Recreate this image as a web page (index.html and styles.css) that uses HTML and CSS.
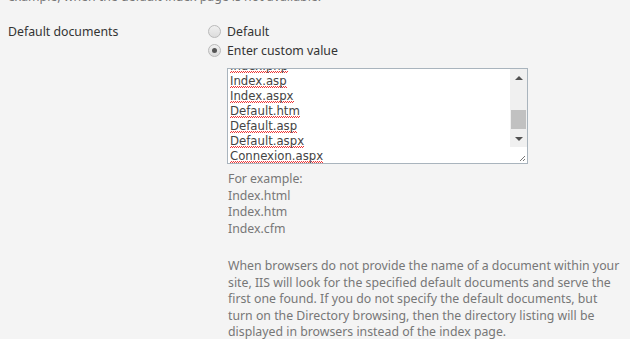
FILE: index.html
```html
<!DOCTYPE html>
<html lang="en">
<head>
  <meta charset="UTF-8">
  <title>Default documents</title>
  <link rel="stylesheet" href="styles.css">
</head>
<body>

  <p class="prev-hint">example, when the default index page is not available.</p>

  <div class="form-row">
    <div class="field-name">Default documents</div>
    <div class="field-value">
      <label class="radio"><span class="radio-dot"></span>Default</label>
      <label class="radio"><span class="radio-dot checked"></span>Enter custom value</label>

      <div class="textarea">
        <div class="textarea-text">
          <div class="lines">
            <span class="spell">Index.php</span>
            <span class="spell">Index.asp</span>
            <span class="spell">Index.aspx</span>
            <span class="spell">Default.htm</span>
            <span class="spell">Default.asp</span>
            <span class="spell">Default.aspx</span>
            <span class="spell">Connexion.aspx</span>
          </div>
        </div>
        <div class="scrollbar">
          <div class="sb-btn"><span class="arrow-up"></span></div>
          <div class="sb-track"><div class="sb-thumb"></div></div>
          <div class="sb-btn"><span class="arrow-down"></span></div>
          <div class="sb-corner">
            <svg width="8" height="8" viewBox="0 0 8 8"><path d="M7 2L2 7M7 5L5 7" stroke="#777" stroke-width="1"/></svg>
          </div>
        </div>
      </div>

      <div class="hint">
        <p>For example:<br>Index.html<br>Index.htm<br>Index.cfm</p>
        <p>When browsers do not provide the name of a document within your<br>
          site, IIS will look for the specified default documents and serve the<br>
          first one found. If you do not specify the default documents, but<br>
          turn on the Directory browsing, then the directory listing will be<br>
          displayed in browsers instead of the index page.</p>
      </div>
    </div>
  </div>

</body>
</html>
```

FILE: styles.css
```css
* { box-sizing: border-box; margin: 0; padding: 0; }
body {
  font-family: "Noto Sans", sans-serif;
  font-size: 12.3px;
  color: #333;
  background: #f4f4f4;
  padding: 0 8px;
  overflow: hidden;
}
.prev-hint {
  color: #777;
  line-height: 16px;
  margin-top: -11px;
}
.form-row {
  display: flex;
  margin-top: 17px;
}
.field-name {
  width: 200px;
  flex-shrink: 0;
  line-height: 19px;
}
.field-value { display: flex; flex-direction: column; }
.radio {
  display: flex;
  align-items: center;
  line-height: 19px;
}
.radio-dot {
  width: 13px;
  height: 13px;
  border-radius: 50%;
  border: 1px solid #b9b9b9;
  background: linear-gradient(#f0f0f0, #dcdcdc);
  margin: 0 6px 0 0;
  display: flex;
  align-items: center;
  justify-content: center;
}
.radio-dot.checked::after {
  content: "";
  width: 5px;
  height: 5px;
  border-radius: 50%;
  background: #555;
}
.textarea {
  display: flex;
  width: 301px;
  height: 96px;
  margin: 8px 0 0 19px;
  border: 1px solid #a9b4bd;
  background: #fff;
}
.textarea-text {
  flex: 1;
  overflow: hidden;
  padding: 0 2px;
  font-family: "DejaVu Sans Condensed", "Noto Sans", sans-serif;
  font-size: 13px;
  color: #444;
  line-height: 15px;
}
.lines { display: flex; flex-direction: column; align-items: flex-start; margin-top: -11px; }
.spell {
  background:
    repeating-linear-gradient(90deg, #e33 0 1px, transparent 1px 2px) 0 100% / 100% 1px no-repeat,
    repeating-linear-gradient(90deg, transparent 0 1px, #e33 1px 2px) 0 calc(100% - 1px) / 100% 1px no-repeat;
}
.scrollbar {
  width: 17px;
  display: flex;
  flex-direction: column;
  background: #f0f0f0;
}
.sb-btn {
  height: 17px;
  display: flex;
  align-items: center;
  justify-content: center;
}
.arrow-up, .arrow-down {
  width: 0;
  height: 0;
  border-left: 4px solid transparent;
  border-right: 4px solid transparent;
}
.arrow-up { border-bottom: 4px solid #505050; }
.arrow-down { border-top: 4px solid #505050; }
.sb-track { flex: 1; display: flex; flex-direction: column; justify-content: flex-end; padding: 0 1px; }
.sb-thumb { height: 19px; background: #c1c1c1; margin-bottom: 1px; }
.sb-corner {
  height: 16px;
  background: #fff;
  display: flex;
  align-items: flex-end;
  justify-content: flex-end;
  padding: 0 1px 1px 0;
}
.hint {
  color: #777;
  line-height: 16.5px;
  margin: 7px 0 0 20px;
  width: 402px;
}
.hint p { margin-bottom: 21px; }
```
